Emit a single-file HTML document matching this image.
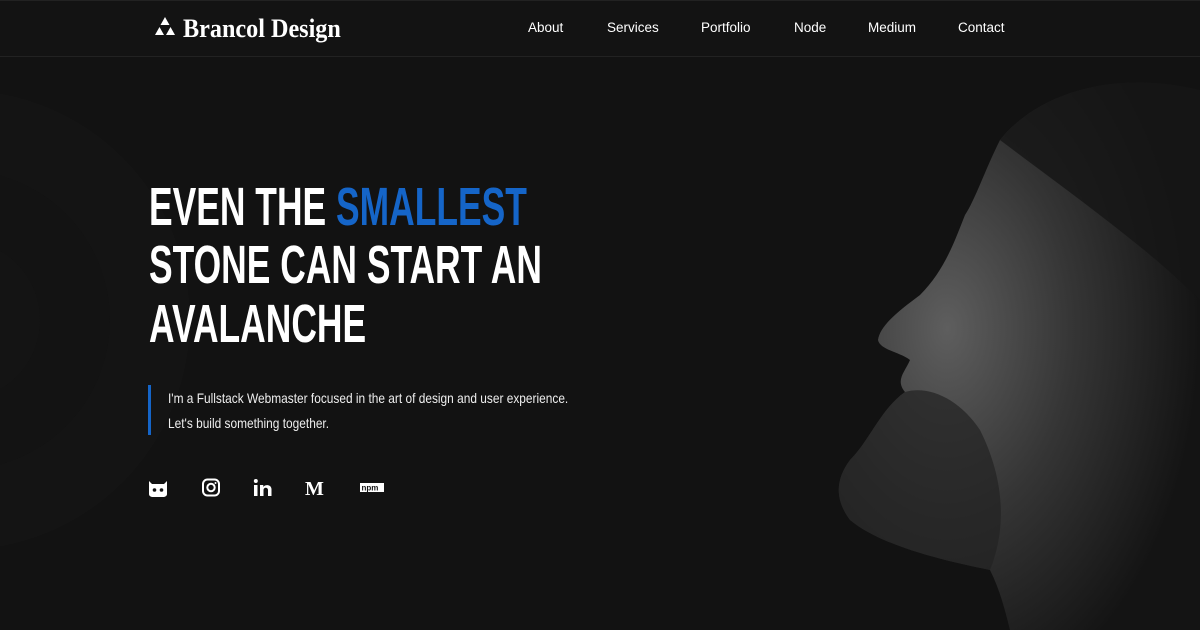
<!DOCTYPE html>
<html><head><meta charset="utf-8"><style>
*{margin:0;padding:0;box-sizing:border-box}
body{width:1200px;height:630px;overflow:hidden;background:#121212;font-family:"Liberation Sans",sans-serif;color:#fff;position:relative}
.nav{position:absolute;top:0;left:0;width:1200px;height:57px;border-bottom:1px solid #222;background:#131313;border-top:1px solid #222}
.logo{position:absolute;left:183px;top:13px;font-family:"Liberation Serif",serif;font-weight:bold;font-size:26px;transform:scaleX(0.93);transform-origin:left top;white-space:nowrap}
.menu a{position:absolute;top:19px;font-size:13.5px;color:#fff;text-decoration:none}
.h{position:absolute;left:149px;font-weight:bold;font-size:54px;transform:scaleX(0.656);transform-origin:left top;white-space:nowrap;line-height:1}
.bl{color:#1565c8}
.bar{position:absolute;left:148px;top:385px;width:3px;height:50px;background:#1565c8}
.p{position:absolute;left:168px;font-size:14px;transform:scaleX(0.85);transform-origin:left top;white-space:nowrap;color:#eee}
</style></head><body>
<svg width="1200" height="630" style="position:absolute;left:0;top:0">
<defs>
<radialGradient id="f" cx="0.3" cy="0.45" r="0.7"><stop offset="0" stop-color="#5e5e5e"/><stop offset="0.5" stop-color="#353535"/><stop offset="1" stop-color="#141414"/></radialGradient>
</defs>
<circle cx="-40" cy="320" r="230" fill="#141414"/>
<circle cx="-40" cy="320" r="150" fill="#131313"/>
<circle cx="-40" cy="320" r="80" fill="#141414"/>
<path d="M1200 90 C1120 70 1040 90 1000 140 C985 170 975 200 965 215 C955 240 945 270 920 295 C900 310 880 325 878 340 C880 350 900 352 910 360 C905 372 895 380 905 392 C880 410 870 440 850 460 C835 480 835 500 850 520 C880 545 940 560 990 570 C1000 590 1005 610 1010 630 L1200 630 Z" fill="url(#f)"/>
<path d="M905 392 C880 410 870 440 850 460 C835 480 835 500 850 520 C880 545 940 560 990 570 C1010 520 1000 470 980 430 C960 400 930 385 905 392Z" fill="#222" opacity="0.7"/>
<path d="M1000 140 C1040 90 1120 70 1200 90 L1200 300 C1150 250 1080 200 1000 140Z" fill="#151515" opacity="0.8"/>
</svg>
<div class="nav">
<svg style="position:absolute;left:154px;top:16px" width="22" height="20" viewBox="0 0 22 20"><path d="M11 0L15.5 8H6.5Z M5.5 10L10 18H1Z M16.5 10L21 18H12Z" fill="#fff"/></svg>
<div class="logo">Brancol Design</div>
<div class="menu"><a style="left:528px">About</a><a style="left:607px">Services</a><a style="left:701px">Portfolio</a><a style="left:794px">Node</a><a style="left:868px">Medium</a><a style="left:958px">Contact</a></div>
</div>
<div class="h" style="top:180px">EVEN THE <span class="bl">SMALLEST</span></div>
<div class="h" style="top:238px">STONE CAN START AN</div>
<div class="h" style="top:297px">AVALANCHE</div>
<div class="bar"></div>
<div class="p" style="top:390px">I'm a Fullstack Webmaster focused in the art of design and user experience.</div>
<div class="p" style="top:415px">Let's build something together.</div>
<svg style="position:absolute;left:148px;top:478px" width="240" height="20" viewBox="0 0 240 20">
<path d="M1 3L4 6H16L19 3V16C19 18 17 19 15 19H5C3 19 1 18 1 16Z" fill="#fff"/><circle cx="6.5" cy="12" r="1.8" fill="#121212"/><circle cx="13.5" cy="12" r="1.8" fill="#121212"/>
<rect x="55" y="1.5" width="16" height="16" rx="4.5" fill="none" stroke="#fff" stroke-width="2"/><circle cx="63" cy="9.5" r="3.7" fill="none" stroke="#fff" stroke-width="2"/><circle cx="67.5" cy="5" r="1" fill="#fff"/>
<rect x="106" y="7" width="3.5" height="11" fill="#fff"/><circle cx="107.8" cy="3" r="2" fill="#fff"/><path d="M112 7H115.3V9C116.5 6.5 123 6 123.5 11V18H120V12C120 9 115.5 9 115.5 12V18H112Z" fill="#fff"/>
<text x="157" y="17" font-family="Liberation Serif" font-weight="bold" font-size="20" fill="#fff">M</text>
<rect x="212" y="5" width="24" height="9" fill="#fff"/><text x="213.5" y="12.5" font-family="Liberation Sans" font-weight="bold" font-size="8" fill="#121212">npm</text>
</svg>
</body></html>
